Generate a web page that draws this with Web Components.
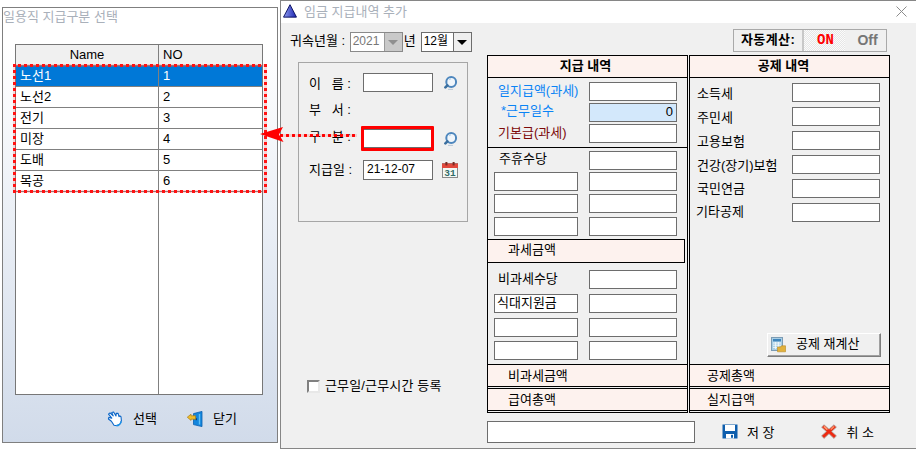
<!DOCTYPE html>
<html lang="ko">
<head>
<meta charset="utf-8">
<title>임금 지급내역 추가</title>
<style>
html,body{margin:0;padding:0;background:#fff}
body{width:916px;height:449px;position:relative;overflow:hidden;font:13px/15px "Liberation Sans","Noto Sans CJK KR",sans-serif;color:#000}
</style>
<script>
class Base extends HTMLElement{
  connectedCallback(){
    if(this.shadowRoot)return;
    const r=this.attachShadow({mode:'open'});
    r.innerHTML='<style>'+this.constructor.css+'</style>'+this.html();
  }
  html(){return '<slot></slot>'}
}
const ICONS={
 tri:'<defs><linearGradient id="t" x1="0" x2="1"><stop offset="0" stop-color="#8f9df0"/><stop offset="1" stop-color="#1a22b0"/></linearGradient></defs><path d="M8 .8 15.4 15H.6z" fill="url(#t)" stroke="#0a1060" stroke-width="1.1"/>',
 lens:'<circle cx="7.2" cy="7" r="4.9" fill="#f1f6fb" stroke="#4d86bd" stroke-width="2"/><path d="M5 4.6 7 3.6" stroke="#b7d2ea" stroke-width="1.2"/><path d="M3.4 10.4 1.4 12.4" stroke="#3b6f9f" stroke-width="2.6" stroke-linecap="round"/><path d="M4 14.4h5" stroke="#b9c8d6" stroke-width="1"/>',
 cal:'<rect x=".5" y="1.5" width="15" height="14" fill="#f4f8f4" stroke="#8a8a8a"/><rect x="0" y="1.5" width="16" height="4.5" fill="#e2493d"/><rect x="3.4" y="0" width="2" height="3.4" fill="#7a2a22"/><rect x="10.6" y="0" width="2" height="3.4" fill="#7a2a22"/><text x="8" y="14.2" font-size="9.5" text-anchor="middle" font-family="Liberation Mono" font-weight="700" fill="#2f6a68">31</text>',
 hand:'<path d="M1.5 3.2 3 1.8l3.2 3L4.8 1.6 6.6 1l2.4 4 .2-2.6 1.8-.2 1 3.4.6-.8 1.4 1 .4 4-1.6 3.6-3 1.4-2.8-.6-2.6-4L1.4 8l.4-1.6 3 .8z" fill="#fff" stroke="#0b66c8" stroke-width="1.1" stroke-linejoin="round"/><path d="M8.4 14.2l2.6 1.4 3.8-3.8-.8-2.2-1.6 3.2z" fill="#1d93e8"/>',
 door:'<path d="M6.5 2.6 15 .4v15.2L6.5 13.6z" fill="#1386dd" stroke="#0a5fb0" stroke-width=".8"/><path d="M12.5 3v10.5" stroke="#5fc0f5" stroke-width="1.4"/><rect x="8.6" y="7.2" width="1.3" height="2" fill="#063d7a"/><path d="M.3 6.2 4 3.2v1.6h4.6v3.4H4v1.2z" fill="#f0bd2a" stroke="#a67a10" stroke-width=".7"/>',
 disk:'<path d="M.5 .5h15v14h-15z" fill="#0e5ead"/><rect x="3" y="1" width="10" height="6" fill="#fff"/><rect x="4" y="10" width="8" height="4.5" fill="#fff"/><rect x="9" y="10.8" width="2" height="3" fill="#0e5ead"/>',
 cross:'<path d="M3 .8 8 5.2 13 .8l2.4 2.4L10.6 7.5l4.8 4.3L13 14.4 8 9.8l-5 4.6L.6 11.8 5.4 7.5.6 3.2z" fill="#ee2a12" stroke="#aaa6a0" stroke-width=".8"/><path d="M2.8 2.4 6.4 5.6" stroke="#ff9c70" stroke-width="1.5"/><path d="M13.2 2.4 9.8 5.6" stroke="#ff9c70" stroke-width="1.3"/>',
 calc:'<rect x=".5" y=".5" width="11" height="13" fill="#a9cfe6" stroke="#7c9cb4"/><rect x="2" y="2" width="8" height="2.4" fill="#3f86bd"/><path d="M2 6h8M2 8.2h8M2 10.4h8M4.6 5v7M7.4 5v7" stroke="#f3f8fb" stroke-width=".9"/><path d="M6.5 10h3l1-1.2h4v6h-8z" fill="#e2b13c" stroke="#b98a20" stroke-width=".6"/>'
};
class PxIcon extends Base{
  static css=':host{display:block;line-height:0;flex:none}svg{display:block}';
  html(){const s=+this.getAttribute('size')||16;return `<svg xmlns="http://www.w3.org/2000/svg" width="${s}" height="${s}" viewBox="0 0 16 16">${ICONS[this.getAttribute('name')]}</svg>`}
}
class PayField extends Base{
  static css=`:host{display:block;box-sizing:border-box;width:88px;height:19px;border:1px solid #6d6d6d;background:#fff;padding:0 2px;font-size:13px;line-height:16px;white-space:nowrap;overflow:hidden;flex:none}
  :host([w=short]){width:84px}:host([w=name]){width:70px;padding-left:3px;font-size:12px;line-height:17px}:host([w=long]){width:208px;height:22px}
  :host([tone=blue]){background:#d3e8fb;text-align:right;padding-right:3px}`;
}
class DropSelect extends Base{
  static css=`:host{display:flex;box-sizing:border-box;height:20px;border:1px solid #6d6d6d;background:#fff;flex:none;font-size:12px;line-height:16px}
  :host([off]){border-color:#8a8a8a;color:#777}
  .v{flex:1;padding-left:2px;white-space:nowrap}
  .b{width:18px;box-sizing:border-box;background:#efefef;border-left:1px solid #6d6d6d;display:flex;align-items:center;justify-content:center}
  :host([off]) .b{background:#c9c9c9;border-left-color:#9a9a9a}
  i{display:block;width:0;height:0;border:5px solid transparent;border-top:5px solid #000;border-bottom:0}
  :host([off]) i{border-top-color:#8f8f8f}`;
  html(){return '<span class="v"><slot></slot></span><span class="b"><i></i></span>'}
}
class AutoToggle extends Base{
  static css=`:host{display:flex;box-sizing:border-box;width:154px;height:23px;border:1px solid #a9a9a9;background:#f0f0f0;font-weight:700;line-height:20px;flex:none}
  .l{width:70px;box-sizing:border-box;padding-left:7px;border-right:2px solid #c8c8c8;white-space:nowrap;letter-spacing:.4px}
  .on{width:41px;box-sizing:border-box;padding-left:2px;text-align:center;color:#f00;background:repeating-conic-gradient(#e6e6e6 0 25%,#fbfbfb 0 50%) 0 0/2px 2px;font-family:"Liberation Mono",monospace;font-size:14px}
  .off{flex:1;padding-left:4px;text-align:center;color:#767676;font-size:14px}`;
  html(){return '<span class="l">자동계산:</span><span class="on">ON</span><span class="off">Off</span>'}
}
class SumRow extends Base{
  static css=`:host{display:block;box-sizing:border-box;height:23px;border-top:1px solid #000;background:#fdf2ee;padding:2px 0 0 20px;line-height:17px;white-space:nowrap;border-bottom:1px solid #000}
  :host([right]){padding-left:17px}`;
}
class PayColumn extends Base{
  static css=`:host{display:flex;flex-direction:column;box-sizing:border-box;width:201px;height:358px;border:1px solid #000;flex:none;position:relative}
  .h{height:21px;flex:none;background:#fdf2ee;border-bottom:1px solid #000;font-weight:700;text-align:center;line-height:20px;white-space:pre;padding-right:4px}
  :host([right]) .h{padding-right:12px}
  .b{flex:1;display:flex;flex-direction:column;min-height:0}
  .f{flex:none;display:flex;flex-direction:column;gap:1px;padding-bottom:1px}`;
  html(){return `<div class="h">${this.getAttribute('heading')}</div><div class="b"><slot></slot></div><div class="f"><slot name="foot"></slot></div>`}
}
class PayRow extends Base{
  static css=`:host{display:flex;justify-content:space-between;align-items:flex-start;flex:none;height:19px;padding:0 10px 0 6px;line-height:18px;white-space:nowrap}
  :host([deduct]){padding:0 9px 0 7px}`;
}
class ToolButton extends Base{
  static css=`:host{display:flex;align-items:center;box-sizing:border-box;width:114px;height:24px;background:#f0f0f0;border:1px solid;border-color:#fff #7d7d7d #7d7d7d #fff;box-shadow:inset -1px -1px 0 #a0a0a0;padding-left:3px;white-space:nowrap;flex:none;align-self:flex-end;margin:auto 8px 7px 0}
  span{margin-left:9px;line-height:14px;margin-top:-2px}`;
  html(){return `<px-icon name="${this.getAttribute('icon')}"></px-icon><span><slot></slot></span>`}
}
class IconAction extends Base{
  static css=`:host{display:flex;align-items:center;white-space:pre;flex:none}
  span{margin-left:var(--g,10px);margin-top:var(--t,-1px)}`;
  html(){return `<px-icon name="${this.getAttribute('icon')}"></px-icon><span><slot></slot></span>`}
}
class PickerWindow extends Base{
  static css=`:host{position:absolute;left:2px;top:7px;width:276px;height:436px;box-sizing:border-box;border:1px solid #7f7f7f;background:linear-gradient(#fff,#fff 8%,#d1dbea 100%);display:flex;flex-direction:column}
  .t{height:36px;flex:none;color:#a9b0ba;line-height:18px;white-space:pre}
  .g{margin-left:12px;width:248px;height:351px;box-sizing:border-box;border:1px solid #777;background:#fff;display:flex;flex-direction:column;flex:none}
  .r{display:grid;grid-template-columns:143px 1fr;height:21px;box-sizing:border-box;border-bottom:1px solid #808080;line-height:19px;flex:none}
  .r>*{padding-left:4px;white-space:nowrap}
  .r>:first-child{border-right:1px solid #808080}
  .hd{background:#f0f0f0}.hd>:first-child{text-align:center;padding:0}
  .sel{background:#0078d7;color:#fff}
  .fill{flex:1;display:grid;grid-template-columns:143px 1fr}.fill>:first-child{border-right:1px solid #808080}
  .a{flex:1;display:flex;align-items:center;padding:0 0 0 104px;--g:10px}
  .a icon-action+icon-action{margin-left:30px}`;
  html(){
    const rows=[['노선1',1],['노선2',2],['전기',3],['미장',4],['도배',5],['목공',6]];
    return `<div class="t">일용직 지급구분 선택</div><div class="g"><div class="r hd"><span>Name</span><span>NO</span></div>`+
    rows.map((x,i)=>`<div class="r${i?'':' sel'}"><span>${x[0]}</span><span>${x[1]}</span></div>`).join('')+
    `<div class="fill"><span></span><span></span></div></div><div class="a"><icon-action icon="hand">선택</icon-action><icon-action icon="door">닫기</icon-action></div>`;
  }
}
class PayWindow extends Base{
  static css=`:host{position:absolute;left:280px;top:0;width:636px;height:449px;box-sizing:border-box;border:1px solid #868686;border-right:0;background:#f0f0f0;display:flex;flex-direction:column}
  .tb{height:22px;flex:none;background:#fff;display:flex;align-items:center;padding-left:2px;position:relative}
  .tb px-icon{margin-top:-3px}
  .tb b{font-weight:400;color:#a9b0ba;margin-left:7px;white-space:pre;margin-top:-2px}
  .x{margin-left:auto;margin-right:9px;display:block;margin-top:-2px}
  .top{display:flex;justify-content:space-between;height:23px;margin-top:6px;padding:0 29px 0 9px;flex:none}
  .sel{display:flex;padding-top:3px;white-space:pre;line-height:18px}
  .main{display:flex;margin-top:3px;height:358px;flex:none}
  .lc{width:206px;flex:none}
  .p{margin:7px 0 0 17px;width:170px;height:160px;box-sizing:border-box;border:1px solid #a6a6a6;padding:10px 0 0 10px}
  .pr{display:flex;align-items:center;height:19px;white-space:pre;line-height:16px}
  .pr>span:first-child{width:54px;flex:none}
  .pr px-icon{margin-left:11px}
  .ck{display:flex;align-items:center;margin:158px 0 0 26px;white-space:pre;line-height:14px}
  .ck i{display:block;box-sizing:border-box;width:13px;height:13px;background:#fff;border:2px solid;border-color:#808080 #e8e8e8 #e8e8e8 #808080;margin-right:5px}
  .ck span{margin-top:-1px;letter-spacing:.15px}
  .d{height:1px;background:#000;margin:4px 0 3px;flex:none}
  .tax{box-sizing:border-box;height:24px;width:197px;border:1px solid #000;border-left:0;background:#fdf2ee;padding-left:20px;line-height:19px;margin:3px 0 7px;flex:none}
  .bot{display:flex;align-items:center;margin-top:8px;height:22px;flex:none}
  .blue{color:#0a84f5}.red{color:#7d0a0a}
  .pt{height:4px;flex:none}
  pay-row+pay-row{margin-top:2px}
  .m3{margin-top:3px!important}.m4{margin-top:4px!important}.m5{margin-top:5px!important}`;
  html(){
    const ded=['소득세','주민세','고용보험','건강(장기)보험','국민연금','기타공제'];
    const dm=[2,2,2,2,1,0];
    return `<div class="tb"><px-icon name="tri" size="14"></px-icon><b>임금 지급내역 추가</b>
      <svg class="x" width="11" height="11" viewBox="0 0 11 11"><path d="M.5 .5l10 10M10.5 .5l-10 10" stroke="#8c8c8c" fill="none"/></svg></div>
    <div class="top"><div class="sel"><span style="margin-right:1px">귀속년월 : </span><drop-select off style="width:53px">2021</drop-select><span style="margin:0 5px 0 1px">년</span><drop-select style="width:51px">12월</drop-select></div><auto-toggle></auto-toggle></div>
    <div class="main"><div class="lc">
      <div class="p">
        <div class="pr"><span style="margin-top:3px">이   름 :</span><pay-field w="name"></pay-field><px-icon name="lens"></px-icon></div>
        <div class="pr" style="margin-top:6px"><span style="margin-top:5px">부   서 :</span></div>
        <div class="pr" style="margin-top:12px"><span style="margin-top:-3px">구   분 :</span><pay-field w="name"></pay-field><px-icon name="lens"></px-icon></div>
        <div class="pr" style="margin-top:12px;height:20px"><span style="margin-top:0">지급일 :</span><pay-field w="name" style="height:20px">21-12-07</pay-field><px-icon name="cal" style="margin-left:9px"></px-icon></div>
      </div>
      <div class="ck"><i></i><span>근무일/근무시간 등록</span></div>
    </div>
    <pay-column heading="지급 내역" style="margin-right:1px">
      <div class="pt"></div>
      <pay-row><span class="blue" style="margin:0 0 0 4px">일지급액(과세)</span><pay-field></pay-field></pay-row>
      <pay-row><span class="blue" style="margin:-1px 0 0 7px">*근무일수</span><pay-field tone="blue">0</pay-field></pay-row>
      <pay-row><span class="red" style="margin:0 0 0 4px">기본급(과세)</span><pay-field></pay-field></pay-row>
      <div class="d"></div>
      <pay-row style="margin-top:0"><span style="margin:-1px 0 0 5px">주휴수당</span><pay-field></pay-field></pay-row>
      <pay-row><pay-field w="short"></pay-field><pay-field></pay-field></pay-row>
      <pay-row class="m3"><pay-field w="short"></pay-field><pay-field></pay-field></pay-row>
      <pay-row class="m4"><pay-field w="short"></pay-field><pay-field></pay-field></pay-row>
      <div class="tax">과세금액</div>
      <pay-row><span style="margin:0 0 0 4px">비과세수당</span><pay-field></pay-field></pay-row>
      <pay-row class="m5"><pay-field w="short">식대지원금</pay-field><pay-field></pay-field></pay-row>
      <pay-row class="m5"><pay-field w="short"></pay-field><pay-field></pay-field></pay-row>
      <pay-row class="m4"><pay-field w="short"></pay-field><pay-field></pay-field></pay-row>
      <sum-row slot="foot">비과세금액</sum-row><sum-row slot="foot">급여총액</sum-row>
    </pay-column>
    <pay-column heading="공제 내역" right>
      <div class="pt" style="height:5px"></div>
      ${ded.map((t,i)=>`<pay-row deduct${i?' class="m5"':''}><span style="margin-top:${dm[i]}px${i==5?';margin-left:-1px':''}">${t}</span><pay-field></pay-field></pay-row>`).join('')}
      <tool-button icon="calc">공제 재계산</tool-button>
      <sum-row slot="foot" right>공제총액</sum-row><sum-row slot="foot" right>실지급액</sum-row>
    </pay-column></div>
    <div class="bot"><pay-field w="long" style="margin-left:206px"></pay-field>
      <icon-action icon="disk" style="margin-left:27px;--g:9px;--t:0px">저 장</icon-action>
      <icon-action icon="cross" style="margin-left:46px;--g:10px;--t:0px">취 소</icon-action></div>`;
  }
}
class RedCallout extends Base{
  static css=`:host{position:absolute;inset:0;pointer-events:none}
  .frame{position:absolute;left:13px;top:64px;width:254px;height:129px;box-sizing:border-box;border:3px dotted #f00}
  .frame::before{content:"";position:absolute;inset:-3px;border:3px solid rgba(255,80,80,.22)}
  .box{position:absolute;left:361px;top:126px;width:73px;height:25px;box-sizing:border-box;border:3px solid #f00;border-radius:1px}
  .line{position:absolute;left:280px;top:134px;width:77px;height:3px;background:radial-gradient(circle at 1.5px 1.5px,#f00 1.4px,rgba(255,80,80,.22) 1.6px) 0 0/6px 3px}
  svg{position:absolute;left:260px;top:126px}`;
  html(){return `<div class="frame"></div><div class="box"></div><div class="line"></div><svg width="24" height="17" viewBox="0 0 24 17"><path d="M0 8 23 1 19 8.5 23.5 16z" fill="#f00"/></svg>`}
}
customElements.define('px-icon',PxIcon);
customElements.define('pay-field',PayField);
customElements.define('drop-select',DropSelect);
customElements.define('auto-toggle',AutoToggle);
customElements.define('sum-row',SumRow);
customElements.define('pay-column',PayColumn);
customElements.define('pay-row',PayRow);
customElements.define('tool-button',ToolButton);
customElements.define('icon-action',IconAction);
customElements.define('picker-window',PickerWindow);
customElements.define('pay-window',PayWindow);
customElements.define('red-callout',RedCallout);
</script>
</head>
<body>
<picker-window></picker-window>
<pay-window></pay-window>
<red-callout></red-callout>
</body>
</html>
